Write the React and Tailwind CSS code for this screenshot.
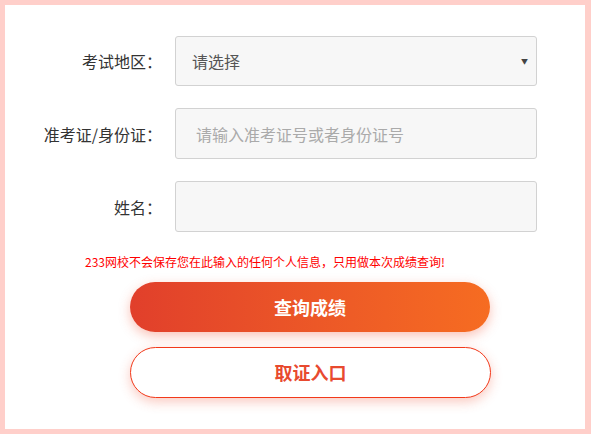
import { useState } from 'react';

const Field = ({ label, children }) => (
  <div className="flex items-center">
    <label className="w-[157px] shrink-0 text-right text-[16px] text-[#333]">{label}</label>
    <div className="ml-[13px] w-[362px]">{children}</div>
  </div>
);

const App = () => {
  const [region, setRegion] = useState('');
  const [idNo, setIdNo] = useState('');
  const [name, setName] = useState('');

  return (
    <div
      className="h-[434px] w-[591px] border-t-[5px] border-l-[5px] border-r-[6px] border-b-[5px] border-[#ffcfca] bg-white"
      style={{ fontFamily: '"Noto Sans CJK SC", "Noto Sans", sans-serif' }}
    >
      <div className="flex flex-col pt-[31px]">
        <div className="flex flex-col gap-[22px]">
          <Field label="考试地区：">
            <div className="relative">
              <select
                value={region}
                onChange={e => setRegion(e.target.value)}
                className="h-[50px] w-full appearance-none rounded-[3px] border border-[#d2d2d2] bg-[#f7f7f7] pl-[16px] text-[16px] text-[#555] outline-none"
              >
                <option value="">请选择</option>
                <option value="bj">北京</option>
                <option value="sh">上海</option>
              </select>
              <span className="pointer-events-none absolute right-[9px] top-1/2 -translate-y-1/2 text-[7px] text-[#444]">▼</span>
            </div>
          </Field>
          <Field label="准考证/身份证：">
            <input
              value={idNo}
              onChange={e => setIdNo(e.target.value)}
              placeholder="请输入准考证号或者身份证号"
              className="h-[51px] w-full rounded-[3px] border border-[#d2d2d2] bg-[#f7f7f7] px-[20px] text-[16px] text-[#555] outline-none placeholder:text-[#aaa]"
            />
          </Field>
          <Field label="姓名：">
            <input
              value={name}
              onChange={e => setName(e.target.value)}
              className="h-[51px] w-full rounded-[3px] border border-[#d2d2d2] bg-[#f7f7f7] px-[20px] text-[16px] text-[#555] outline-none"
            />
          </Field>
        </div>

        <p className="mt-[22px] pl-[80px] text-[12px] leading-[16px] text-[#ff0000]">
          233网校不会保存您在此输入的任何个人信息，只用做本次成绩查询!
        </p>

        <div className="mt-[12px] flex flex-col gap-[15px] pl-[125px]">
          <button className="h-[50px] w-[360px] rounded-full bg-gradient-to-r from-[#e13f2b] to-[#f66c21] text-[18px] font-bold text-white shadow-[0_4px_12px_rgba(240,80,50,0.35)]">
            查询成绩
          </button>
          <button className="h-[51px] w-[361px] rounded-full border border-[#f2391a] bg-white text-[18px] font-bold text-[#e84a2f] shadow-[0_4px_12px_rgba(240,80,50,0.3)]">
            取证入口
          </button>
        </div>
      </div>
    </div>
  );
};

export default App;
